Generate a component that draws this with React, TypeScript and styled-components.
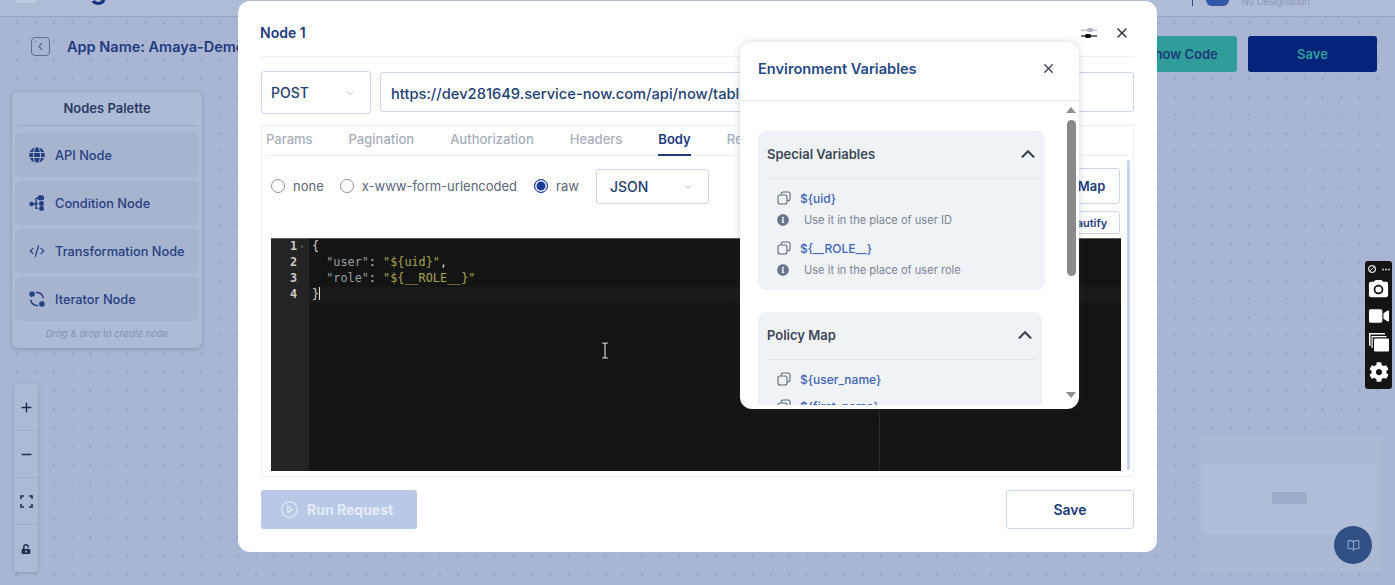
import { FC, ReactNode } from "react";
import styled, { createGlobalStyle } from "styled-components";
import { BookOpen, ChevronDown, ChevronUp, CodeXml, Minus, Plus, X } from "lucide-react";
import { FaCog, FaGlobe, FaInfoCircle, FaUnlockAlt, FaVideo } from "react-icons/fa";
import { MdCameraAlt } from "react-icons/md";

const GlobalStyle = createGlobalStyle`
	html, body {
		margin: 0;
		padding: 0;
		font-family: Inter, "Noto Sans", sans-serif;
	}
	* {
		box-sizing: border-box;
	}
`;

const NAVY = "#1e3a7c";

const Page = styled.div`
	position: relative;
	width: 1395px;
	height: 585px;
	overflow: hidden;
	background-color: #a9b6d3;
	background-image: radial-gradient(circle, #8a99b8 0.8px, transparent 1.1px);
	background-size: 18.4px 18.4px;
	background-position: 7.8px -4.5px;
`;

const TopBar = styled.header`
	display: flex;
	height: 16px;
	overflow: hidden;
	padding-left: 15px;
	padding-right: 85px;
	background: #b0bcd6;
	box-shadow: 0 1px 1px rgba(120, 135, 170, 0.35);
`;

const LogoBox = styled.div`
	width: 21px;
	height: 3px;
	background: #c0cae0;
	border-radius: 0 0 3px 3px;
`;

const LogoText = styled.div`
	margin: -27px 0 0 19px;
	font-size: 26px;
	line-height: 34px;
	font-weight: 700;
	letter-spacing: 1.5px;
	color: #8ea4bd;

	span {
		color: #12307f;
	}
`;

const UserArea = styled.div`
	margin-left: auto;
	display: flex;
	align-items: flex-start;
`;

const UserSep = styled.div`
	width: 1px;
	height: 6px;
	background: #33456f;
`;

const UserAvatar = styled.div`
	width: 23px;
	height: 6px;
	margin-left: 13px;
	background: #3159a8;
	border-radius: 0 0 10px 10px;
`;

const UserRole = styled.div`
	margin: -5px 0 0 12px;
	font-size: 9.5px;
	line-height: 14px;
	color: #8a97b4;
`;

const AppBar = styled.div`
	display: flex;
	align-items: flex-start;
	height: 76px;
	padding: 21px 18px 0 31px;
`;

const BackButton = styled.button`
	display: flex;
	align-items: center;
	justify-content: center;
	width: 19px;
	height: 19px;
	padding: 0;
	border: 1.5px solid #5d6d8f;
	border-radius: 4px;
	background: transparent;
	color: #5d6d8f;
`;

const AppTitle = styled.div`
	margin-left: 17px;
	font-size: 14.5px;
	line-height: 20px;
	font-weight: 600;
	color: #1f3a80;
	white-space: nowrap;
`;

const BarButton = styled.button<{ $primary?: boolean }>`
	width: ${(p) => (p.$primary ? "129px" : "110px")};
	height: 36px;
	margin: -1px 0 0 ${(p) => (p.$primary ? "11px" : "auto")};
	border: none;
	border-radius: 3px;
	font: 600 13px Inter, sans-serif;
	background: ${(p) => (p.$primary ? "#04237a" : "#2f9e9a")};
	color: ${(p) => (p.$primary ? "#2f9e9a" : "#1c3a78")};
`;

const Palette = styled.aside`
	width: 190px;
	height: 256px;
	margin-left: 12px;
	padding: 0 3px;
	background: #aebbd6;
	border-radius: 6px;
	box-shadow: 0 1px 4px rgba(90, 105, 145, 0.45);
`;

const PaletteTitle = styled.div`
	height: 34px;
	line-height: 33px;
	margin: 0 2px 7px;
	text-align: center;
	font-size: 13px;
	font-weight: 600;
	color: #2b3a63;
	border-bottom: 1px solid #9dabcb;
`;

const PaletteItem = styled.div`
	display: flex;
	align-items: center;
	gap: 10px;
	height: 44px;
	margin-bottom: 4px;
	padding-left: 14px;
	border-radius: 6px;
	background: #a7b4d0;
	font-size: 12.8px;
	font-weight: 500;
	color: #254080;

	svg {
		flex: none;
		width: 16px;
		height: 16px;
	}
`;

const PaletteHint = styled.div`
	margin-top: 7px;
	text-align: center;
	font-size: 9.5px;
	font-style: italic;
	color: #8492b2;
`;

const ZoomControls = styled.div`
	width: 24px;
	margin: 36px 0 0 14px;
	background: #aebad5;
	border-radius: 2px;
	box-shadow: 0 1px 3px rgba(90, 105, 145, 0.45);
`;

const ZoomCell = styled.div`
	display: flex;
	align-items: center;
	justify-content: center;
	height: 47px;
	color: #1f2c52;
	border-bottom: 1px solid #a2afcc;

	&:last-child {
		border-bottom: none;
	}
`;

const MiniMap = styled.div`
	position: absolute;
	left: 1200px;
	top: 437px;
	width: 182px;
	height: 135px;
	padding: 26px 7px 0 3px;
	background: #acb9d4;
`;

const MiniViewport = styled.div`
	display: flex;
	align-items: center;
	justify-content: center;
	height: 70px;
	background: #b1bdd7;
`;

const MiniNode = styled.div`
	width: 35px;
	height: 12px;
	background: #9dabc8;
`;

const HelpFab = styled.div`
	position: absolute;
	left: 1334px;
	top: 526px;
	width: 38px;
	height: 38px;
	display: flex;
	align-items: center;
	justify-content: center;
	border-radius: 50%;
	background: #304f85;
	color: #8fa5cc;
`;

const Recorder = styled.div`
	position: absolute;
	left: 1365px;
	top: 261px;
	width: 27px;
	height: 128px;
	display: flex;
	flex-direction: column;
	align-items: center;
	padding-top: 1px;
	background: #141414;
	border-radius: 3px;
	color: #fff;
`;

const RecorderSlot = styled.div<{ $h: number }>`
	display: flex;
	align-items: center;
	justify-content: center;
	height: ${(p) => p.$h}px;
`;

const Modal = styled.section`
	position: absolute;
	left: 238px;
	top: 1px;
	width: 919px;
	height: 551px;
	display: flex;
	flex-direction: column;
	padding: 0 23px;
	background: #fff;
	border-radius: 12px;
`;

const ModalHeader = styled.div`
	display: flex;
	align-items: center;
	height: 56px;
	padding-top: 8px;
	border-bottom: 1px solid #eef0f4;
`;

const ModalTitle = styled.h2`
	margin: 0 0 0 -1px;
	font-size: 14px;
	font-weight: 600;
	color: ${NAVY};
`;

const HeaderTools = styled.div`
	display: flex;
	align-items: center;
	gap: 16px;
	margin-left: auto;
	padding-right: 4px;
	color: #2a3340;
`;

const RequestRow = styled.div`
	display: flex;
	gap: 9px;
	margin-top: 14px;
	align-items: flex-start;
`;

const SelectBox = styled.div<{ $w: number; $h: number; $pad: number }>`
	display: flex;
	align-items: center;
	justify-content: space-between;
	width: ${(p) => p.$w}px;
	height: ${(p) => p.$h}px;
	padding: 0 14px 0 ${(p) => p.$pad}px;
	border: 1px solid #ccd6ee;
	border-radius: 3px;
	background: #fff;
	font-size: 14px;
	font-weight: 500;
	color: #27406f;

	svg {
		color: #b3bccd;
	}
`;

const UrlInput = styled.div`
	flex: 1;
	height: 40px;
	margin-top: 1px;
	padding: 0 10px;
	line-height: 42px;
	border: 1px solid #ccd6ee;
	border-radius: 3px;
	font-size: 14.7px;
	font-weight: 500;
	color: #1f3f74;
	white-space: nowrap;
	overflow: hidden;
`;

const RequestPanel = styled.div`
	position: relative;
	height: 352px;
	margin-top: 11px;
	padding: 0 4px;
	border: 1px solid #eff1f5;
`;

const Tabs = styled.div`
	display: flex;
	gap: 36px;
	height: 30px;
	border-bottom: 1px solid #eef0f4;
`;

const Tab = styled.div<{ $active?: boolean }>`
	height: 30px;
	line-height: 27px;
	font-size: 13px;
	font-weight: ${(p) => (p.$active ? 600 : 500)};
	color: ${(p) => (p.$active ? NAVY : "#a7aebb")};
	border-bottom: 2px solid ${(p) => (p.$active ? NAVY : "transparent")};
`;

const BodyOptions = styled.div`
	display: flex;
	align-items: flex-start;
	height: 82px;
	padding: 13px 9px 0 5px;
`;

const RadioLabel = styled.label`
	display: flex;
	align-items: center;
	gap: 8px;
	height: 34px;
	margin-right: 16px;
	font-size: 13px;
	color: #5b6678;

	&:nth-child(2),
	&:nth-child(3) {
		margin-right: 17px;
	}
`;

const RadioDot = styled.span<{ $checked?: boolean }>`
	display: block;
	width: 14px;
	height: 14px;
	border-radius: 50%;
	border: 1.5px solid ${(p) => (p.$checked ? "#1b3d96" : "#8d95a3")};
	background: ${(p) => (p.$checked ? "#1b3d96" : "#fff")};
	box-shadow: ${(p) => (p.$checked ? "inset 0 0 0 1.5px #fff" : "none")};
`;

const OptionActions = styled.div`
	display: flex;
	flex-direction: column;
	align-items: flex-end;
	gap: 7px;
	margin: -1px 0 0 auto;
`;

const OutlineButton = styled.button<{ $h: number; $w: number; $size: number }>`
	height: ${(p) => p.$h}px;
	width: ${(p) => p.$w}px;
	padding: 0;
	background: #fff;
	border: 1px solid #ccd6ee;
	border-radius: 3px;
	font: 600 ${(p) => p.$size}px Inter, sans-serif;
	color: ${NAVY};
`;

const PanelScroll = styled.div`
	position: absolute;
	right: 3px;
	top: 34px;
	width: 3px;
	height: 310px;
	background: #c8d4ee;
	border-radius: 2px;
`;

const Editor = styled.div`
	position: relative;
	display: flex;
	width: 850px;
	height: 233px;
	margin-left: 5px;
	background: #141414;
	border-top: 1px solid #5a5a5a;
	font-family: "DejaVu Sans Mono", monospace;
	font-size: 11.8px;
	line-height: 15.9px;
	overflow: hidden;
`;

const Gutter = styled.div`
	flex: none;
	width: 38px;
	background: #242424;
	color: #c9c9c9;
	font-weight: 700;
	text-align: right;
	padding-right: 12px;
`;

const FoldMark = styled.span`
	position: absolute;
	left: 29px;
	top: 1px;
	font-size: 7px;
	color: #666;
`;

const CodeArea = styled.div`
	flex: 1;
`;

const CodeLine = styled.div<{ $active?: boolean }>`
	height: 15.9px;
	padding-left: 3px;
	white-space: pre;
	color: #cfcfcf;
	background: ${(p) => (p.$active ? "#1a1a1a" : "transparent")};
`;

const CodeKey = styled.span`
	color: #93a1a1;
`;

const CodeValue = styled.span`
	color: #a5a64c;
`;

const Caret = styled.span`
	display: inline-block;
	width: 1px;
	height: 13px;
	vertical-align: -2px;
	background: #ddd;
`;

const PrintMargin = styled.div`
	position: absolute;
	left: 608px;
	top: 0;
	bottom: 0;
	width: 1px;
	background: #2a2a2a;
`;

const IBeam = styled.svg`
	position: absolute;
	left: 330px;
	top: 103px;
`;

const ModalFooter = styled.div`
	display: flex;
	justify-content: space-between;
	margin-top: 13px;
`;

const RunButton = styled.button`
	display: flex;
	align-items: center;
	gap: 9px;
	width: 156px;
	height: 39px;
	padding: 0 0 0 20px;
	border: none;
	border-radius: 3px;
	background: #b9c8e7;
	font: 700 14px Inter, sans-serif;
	color: #e6ecf8;
`;

const EnvPopup = styled.aside`
	position: absolute;
	left: 740px;
	top: 42px;
	width: 339px;
	height: 367px;
	display: flex;
	flex-direction: column;
	background: #fff;
	border-radius: 12px;
	box-shadow: 0 0 8px rgba(60, 75, 110, 0.22);
	overflow: hidden;
`;

const EnvHeader = styled.div`
	flex: none;
	display: flex;
	align-items: center;
	justify-content: space-between;
	height: 59px;
	padding: 0 23px 5px 18px;
	border-bottom: 1px solid #e9ebef;
`;

const EnvTitle = styled.h3`
	margin: 0;
	font-size: 14.6px;
	font-weight: 600;
	color: #2a4a86;
`;

const EnvBody = styled.div`
	position: relative;
	flex: 1;
	padding: 30px 0 0 18px;
	margin-bottom: 4px;
	overflow: hidden;
`;

const VarCard = styled.div<{ $w: number }>`
	width: ${(p) => p.$w}px;
	margin-bottom: 22px;
	padding: 0 7px 3px 9px;
	background: #eff3f7;
	border-radius: 8px;
`;

const CardHead = styled.div`
	display: flex;
	align-items: center;
	justify-content: space-between;
	height: 48px;
	margin-bottom: 8px;
	padding-bottom: 2px;
	font-size: 13px;
	font-weight: 600;
	color: #3e4654;
	border-bottom: 1px solid #e2e6ed;

	svg {
		margin-right: -1px;
		color: #3e4654;
	}
`;

const VarRow = styled.div<{ $plain?: boolean }>`
	display: flex;
	align-items: center;
	gap: 9px;
	height: 22px;
	margin-bottom: ${(p) => (p.$plain ? "5px" : "0")};
	padding-left: 10px;
	font-size: 12px;
	font-weight: 500;
	color: #3f63b5;
`;

const VarHint = styled.div`
	display: flex;
	align-items: center;
	gap: 15px;
	height: 22px;
	margin-bottom: 6px;
	padding-left: 10px;
	font-size: 11.1px;
	color: #7b8494;

	svg {
		color: #66758c;
	}
`;

const ScrollTrack = styled.div`
	position: absolute;
	right: 3px;
	top: 6px;
	bottom: 0;
	width: 10px;
	display: flex;
	flex-direction: column;
	align-items: center;
`;

const ScrollArrow = styled.div<{ $down?: boolean }>`
	width: 0;
	height: 0;
	border-left: 5px solid transparent;
	border-right: 5px solid transparent;
	${(p) => (p.$down ? "border-top: 6px solid #909090; margin-top: auto; margin-bottom: 7px;" : "border-bottom: 6px solid #909090;")}
`;

const ScrollThumb = styled.div`
	width: 9px;
	height: 156px;
	margin-top: 7px;
	border-radius: 5px;
	background: #8a8a8a;
`;

const ConditionIcon = () => (
	<svg viewBox='0 0 16 16' fill='none' stroke='currentColor' strokeWidth='1.4'>
		<circle cx='2.6' cy='9' r='1.6' fill='currentColor' />
		<path d='M4 9h4M7 3.2h2M7 3.2v10.2h2M7 8.5h2' />
		<rect x='9.3' y='1' width='5' height='3.6' rx='1.2' fill='currentColor' />
		<circle cx='12.5' cy='8.5' r='1.8' fill='currentColor' />
		<circle cx='12.5' cy='13.4' r='1.8' fill='currentColor' />
	</svg>
);

const IteratorIcon = () => (
	<svg viewBox='0 0 16 16' fill='none' stroke='currentColor' strokeWidth='1.5'>
		<path d='M7 1.6a6.5 6.5 0 0 1 7.4 5.6M9 14.4A6.5 6.5 0 0 1 1.6 8.8' />
		<path d='M2.2 5.6a6.6 6.6 0 0 1 .9-1.5M13.8 10.4a6.6 6.6 0 0 1-.9 1.5' />
		<rect x='1.2' y='1.2' width='3.8' height='3.6' rx='0.8' fill='currentColor' />
		<rect x='11' y='11.2' width='3.8' height='3.6' rx='0.8' fill='currentColor' />
	</svg>
);

const FocusIcon = () => (
	<svg width='13' height='13' viewBox='0 0 13 13' fill='none' stroke='currentColor' strokeWidth='1.6'>
		<path d='M1 4V1h3M9 1h3v3M12 9v3H9M4 12H1V9' />
	</svg>
);

const TweakIcon = () => (
	<svg width='18' height='14' viewBox='0 0 18 14'>
		<path d='M1 4.2h16' stroke='#b4b8c0' strokeWidth='1.2' />
		<rect x='7' y='2' width='6' height='4' rx='1.5' fill='#b4b8c0' />
		<path d='M1 10h16' stroke='#111' strokeWidth='1.2' />
		<rect x='5' y='8' width='6' height='4' rx='1.5' fill='#111' />
	</svg>
);

const CopyIcon = () => (
	<svg width='14' height='14' viewBox='0 0 14 14' fill='none' stroke='#5f6874' strokeWidth='1.1' style={{ flex: "none" }}>
		<rect x='1' y='4' width='9' height='9' rx='2' />
		<path d='M4.2 3.6V3a2 2 0 0 1 2-2H11a2 2 0 0 1 2 2v4.8a2 2 0 0 1-2 2h-.6' />
	</svg>
);

const PlayCircle = () => (
	<svg width='17' height='17' viewBox='0 0 17 17' fill='none' stroke='#e6ecf8' strokeWidth='1.1'>
		<circle cx='8.5' cy='8.5' r='7.8' />
		<path d='M6.8 5.4l4.6 3.1-4.6 3.1z' />
	</svg>
);

const StackIcon = () => (
	<svg width='20' height='19' viewBox='0 0 20 19' fill='#fff'>
		<path d='M0 0h16v1.5H1.5V13H0zM2.5 3h15v1.2H3.7V15H2.5z' />
		<rect x='5' y='5.5' width='15' height='13' rx='1' />
	</svg>
);

const RecorderLogo = () => (
	<svg width='24' height='10' viewBox='0 0 24 10'>
		<circle cx='5' cy='5' r='3.4' fill='none' stroke='#ddd' strokeWidth='1.3' />
		<path d='M2 8l6-6' stroke='#ddd' strokeWidth='1' />
		<circle cx='16' cy='5.5' r='1' fill='#ccc' />
		<circle cx='19' cy='5.5' r='1' fill='#ccc' />
		<circle cx='22' cy='5.5' r='1' fill='#ccc' />
	</svg>
);

const paletteItems: { name: string; icon: ReactNode }[] = [
	{ name: "API Node", icon: <FaGlobe /> },
	{ name: "Condition Node", icon: <ConditionIcon /> },
	{ name: "Transformation Node", icon: <CodeXml strokeWidth={1.8} /> },
	{ name: "Iterator Node", icon: <IteratorIcon /> },
];

const tabs = ["Params", "Pagination", "Authorization", "Headers", "Body", "Response"];

const Radio: FC<{ label: string; checked?: boolean }> = ({ label, checked }) => (
	<RadioLabel>
		<RadioDot $checked={checked} />
		{label}
	</RadioLabel>
);

const VarEntry: FC<{ name: string; hint?: string }> = ({ name, hint }) => (
	<>
		<VarRow $plain={!hint}>
			<CopyIcon />
			{name}
		</VarRow>
		{hint && (
			<VarHint>
				<FaInfoCircle size={12} />
				{hint}
			</VarHint>
		)}
	</>
);

const App: FC = () => {
	return (
		<Page>
			<GlobalStyle />
			<TopBar>
				<LogoBox />
				<LogoText>
					bo<span>g</span>iheat
				</LogoText>
				<UserArea>
					<UserSep />
					<UserAvatar />
					<UserRole>No Designation</UserRole>
				</UserArea>
			</TopBar>

			<AppBar>
				<BackButton>
					<svg width='7' height='9' viewBox='0 0 7 9' fill='none' stroke='currentColor' strokeWidth='1.2'>
						<path d='M5 1L2 4.5 5 8' />
					</svg>
				</BackButton>
				<AppTitle>App Name: Amaya-Demo</AppTitle>
				<BarButton>Show Code</BarButton>
				<BarButton $primary>Save</BarButton>
			</AppBar>

			<Palette>
				<PaletteTitle>Nodes Palette</PaletteTitle>
				{paletteItems.map((item) => (
					<PaletteItem key={item.name}>
						{item.icon}
						{item.name}
					</PaletteItem>
				))}
				<PaletteHint>Drag &amp; drop to create node</PaletteHint>
			</Palette>

			<ZoomControls>
				<ZoomCell>
					<Plus size={15} strokeWidth={2.2} />
				</ZoomCell>
				<ZoomCell>
					<Minus size={15} strokeWidth={2.2} />
				</ZoomCell>
				<ZoomCell>
					<FocusIcon />
				</ZoomCell>
				<ZoomCell>
					<FaUnlockAlt size={10} />
				</ZoomCell>
			</ZoomControls>

			<MiniMap>
				<MiniViewport>
					<MiniNode />
				</MiniViewport>
			</MiniMap>
			<HelpFab>
				<BookOpen size={13} />
			</HelpFab>

			<Recorder>
				<RecorderSlot $h={14}>
					<RecorderLogo />
				</RecorderSlot>
				<RecorderSlot $h={27}>
					<MdCameraAlt size={23} />
				</RecorderSlot>
				<RecorderSlot $h={26}>
					<FaVideo size={20} />
				</RecorderSlot>
				<RecorderSlot $h={27}>
					<StackIcon />
				</RecorderSlot>
				<RecorderSlot $h={31}>
					<FaCog size={20} />
				</RecorderSlot>
			</Recorder>

			<Modal>
				<ModalHeader>
					<ModalTitle>Node 1</ModalTitle>
					<HeaderTools>
						<TweakIcon />
						<X size={16} strokeWidth={2} />
					</HeaderTools>
				</ModalHeader>

				<RequestRow>
					<SelectBox $w={110} $h={43} $pad={9}>
						POST
						<ChevronDown size={12} />
					</SelectBox>
					<UrlInput>https://dev281649.service-now.com/api/now/table/sys_user</UrlInput>
				</RequestRow>

				<RequestPanel>
					<Tabs>
						{tabs.map((tab) => (
							<Tab key={tab} $active={tab === "Body"}>
								{tab}
							</Tab>
						))}
					</Tabs>
					<BodyOptions>
						<Radio label='none' />
						<Radio label='x-www-form-urlencoded' />
						<Radio label='raw' checked />
						<SelectBox $w={113} $h={35} $pad={13}>
							JSON
							<ChevronDown size={12} />
						</SelectBox>
						<OptionActions>
							<OutlineButton $h={36} $w={98} $size={13}>
								Policy Map
							</OutlineButton>
							<OutlineButton $h={23} $w={70} $size={11}>
								Beautify
							</OutlineButton>
						</OptionActions>
					</BodyOptions>
					<Editor>
						<Gutter>
							<div>1</div>
							<div>2</div>
							<div>3</div>
							<div>4</div>
						</Gutter>
						<FoldMark>▾</FoldMark>
						<CodeArea>
							<CodeLine>{"{"}</CodeLine>
							<CodeLine>
								{"  "}
								<CodeKey>"user"</CodeKey>: <CodeValue>"{"${uid}"}"</CodeValue>,
							</CodeLine>
							<CodeLine>
								{"  "}
								<CodeKey>"role"</CodeKey>: <CodeValue>"{"${__ROLE__}"}"</CodeValue>
							</CodeLine>
							<CodeLine $active>
								{"}"}
								<Caret />
							</CodeLine>
						</CodeArea>
						<PrintMargin />
						<IBeam width='8' height='17' viewBox='0 0 8 17' fill='none' stroke='#d0d0d0' strokeWidth='1.2'>
							<path d='M1 1h2l1 1 1-1h2M4 2v13M1 16h2l1-1 1 1h2' />
						</IBeam>
					</Editor>
					<PanelScroll />
				</RequestPanel>

				<ModalFooter>
					<RunButton>
						<PlayCircle />
						Run Request
					</RunButton>
					<OutlineButton $h={39} $w={128} $size={14}>
						Save
					</OutlineButton>
				</ModalFooter>
			</Modal>

			<EnvPopup>
				<EnvHeader>
					<EnvTitle>Environment Variables</EnvTitle>
					<X size={15} strokeWidth={2} color='#2f3a4a' />
				</EnvHeader>
				<EnvBody>
					<VarCard $w={287}>
						<CardHead>
							Special Variables
							<ChevronUp size={22} strokeWidth={2.4} />
						</CardHead>
						<VarEntry name='${uid}' hint='Use it in the place of user ID' />
						<VarEntry name='${__ROLE__}' hint='Use it in the place of user role' />
					</VarCard>
					<VarCard $w={284}>
						<CardHead>
							Policy Map
							<ChevronUp size={22} strokeWidth={2.4} />
						</CardHead>
						<VarEntry name='${user_name}' />
						<VarEntry name='${first_name}' />
					</VarCard>
					<ScrollTrack>
						<ScrollArrow />
						<ScrollThumb />
						<ScrollArrow $down />
					</ScrollTrack>
				</EnvBody>
			</EnvPopup>
		</Page>
	);
};

export default App;
